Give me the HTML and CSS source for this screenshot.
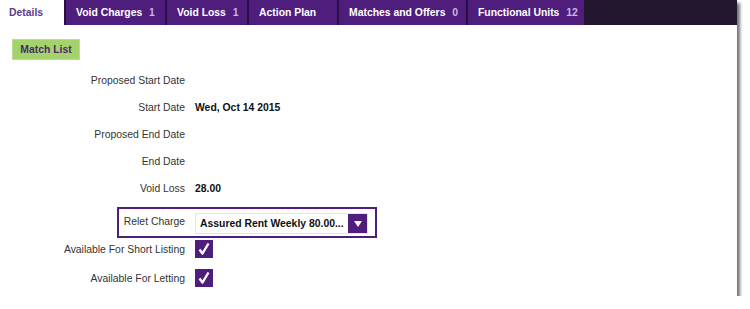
FILE: index.html
```html
<!DOCTYPE html>
<html lang="en">
	<head>
		<meta charset="UTF-8" />
		<title>Void Details</title>
		<link rel="stylesheet" href="styles.css">
	</head>
	<body>
		<div class="panel">
			<div class="tabs">
				<div class="tab active">Details</div>
				<div class="tab">Void Charges <span class="count">1</span></div>
				<div class="tab">Void Loss <span class="count">1</span></div>
				<div class="tab">Action Plan</div>
				<div class="tab">Matches and Offers <span class="count">0</span></div>
				<div class="tab">Functional Units <span class="count">12</span></div>
			</div>
			<div class="content">
				<button class="match-btn">Match List</button>
				<div class="form">
					<div class="row">
						<div class="label">Proposed Start Date</div>
						<div class="value"></div>
					</div>
					<div class="row">
						<div class="label">Start Date</div>
						<div class="value">Wed, Oct 14 2015</div>
					</div>
					<div class="row">
						<div class="label">Proposed End Date</div>
						<div class="value"></div>
					</div>
					<div class="row">
						<div class="label">End Date</div>
						<div class="value"></div>
					</div>
					<div class="row">
						<div class="label">Void Loss</div>
						<div class="value">28.00</div>
					</div>
					<div class="relet">
						<div class="relet-label">Relet Charge</div>
						<div class="select">
							<span class="select-text">Assured Rent Weekly 80.00...</span>
							<span class="select-arrow">
								<svg width="8" height="6" viewBox="0 0 8 6"><path d="M0 0 H8 L4 6 Z" fill="#fff"/></svg>
							</span>
						</div>
					</div>
					<div class="check-row">
						<div class="label">Available For Short Listing</div>
						<span class="checkbox">
							<svg width="18" height="18" viewBox="0 0 18 18"><path d="M4.5 9.5 L7.5 13.5 L13.5 3.5" fill="none" stroke="#fff" stroke-width="2.4" stroke-linejoin="round"/></svg>
						</span>
					</div>
					<div class="check-row second">
						<div class="label">Available For Letting</div>
						<span class="checkbox">
							<svg width="18" height="18" viewBox="0 0 18 18"><path d="M4.5 9.5 L7.5 13.5 L13.5 3.5" fill="none" stroke="#fff" stroke-width="2.4" stroke-linejoin="round"/></svg>
						</span>
					</div>
				</div>
			</div>
		</div>
	</body>
</html>
```

FILE: styles.css
```css
body {
	margin: 0;
	padding: 0;
	background: #fff;
	font-family: "Liberation Sans", Arial, sans-serif;
	font-size: 10.4px;
	color: #333;
}
.panel {
	width: 737px;
	height: 296px;
	background: #fff;
	box-shadow: 3px 3px 3px rgba(0, 0, 0, 0.55);
}
.tabs {
	display: flex;
	height: 25px;
	background: #23162f;
}
.tab {
	display: flex;
	align-items: center;
	box-sizing: border-box;
	padding-left: 10px;
	background: #4f1d7b;
	border-left: 2px solid #2a0f44;
	color: #fff;
	font-weight: bold;
	white-space: pre;
}
.tab:nth-child(2) { width: 101px; }
.tab:nth-child(3) { width: 82px; }
.tab:nth-child(4) { width: 90px; }
.tab:nth-child(5) { width: 129px; }
.tab:nth-child(6) { width: 118px; }
.tab.active {
	width: 64px;
	background: #fff;
	color: #5a3d8c;
	border-left: none;
	padding-left: 9px;
}
.count {
	color: #c9b6e2;
	margin-left: 4px;
}
.content {
	padding: 14px 0 0 12px;
}
.match-btn {
	display: block;
	width: 68px;
	height: 21px;
	padding: 0;
	border: 1px solid #b9df8f;
	background: #a5d36b;
	color: #4a2a6e;
	font-family: inherit;
	font-size: 10.4px;
	font-weight: bold;
}
.form {
	display: flex;
	flex-direction: column;
	margin-top: 7px;
	margin-left: -12px;
}
.row {
	display: flex;
	align-items: center;
	height: 27px;
}
.label {
	width: 185px;
	text-align: right;
	flex-shrink: 0;
}
.value {
	margin-left: 10px;
	font-weight: bold;
	color: #111;
}
.relet {
	display: flex;
	align-items: flex-start;
	width: 256px;
	height: 23px;
	margin: 5px 0 0 117px;
	border: 2px solid #4f1d7b;
	padding-top: 4px;
}
.relet-label {
	width: 66px;
	text-align: right;
	flex-shrink: 0;
	padding-top: 3px;
}
.select {
	display: flex;
	align-items: center;
	justify-content: space-between;
	margin-left: 10px;
	width: 173px;
	height: 21px;
	border: 1px solid #e4e4e4;
	padding-left: 4px;
	box-sizing: border-box;
}
.select-text {
	font-weight: bold;
	color: #111;
	white-space: nowrap;
}
.select-arrow {
	display: flex;
	align-items: center;
	justify-content: center;
	width: 19px;
	height: 19px;
	background: #4f1d7b;
}
.check-row {
	display: flex;
	align-items: center;
	height: 18px;
	margin-top: 2px;
}
.check-row.second {
	margin-top: 11px;
}
.checkbox {
	display: block;
	width: 18px;
	height: 18px;
	margin-left: 10px;
	background: #4f1d7b;
}
```
